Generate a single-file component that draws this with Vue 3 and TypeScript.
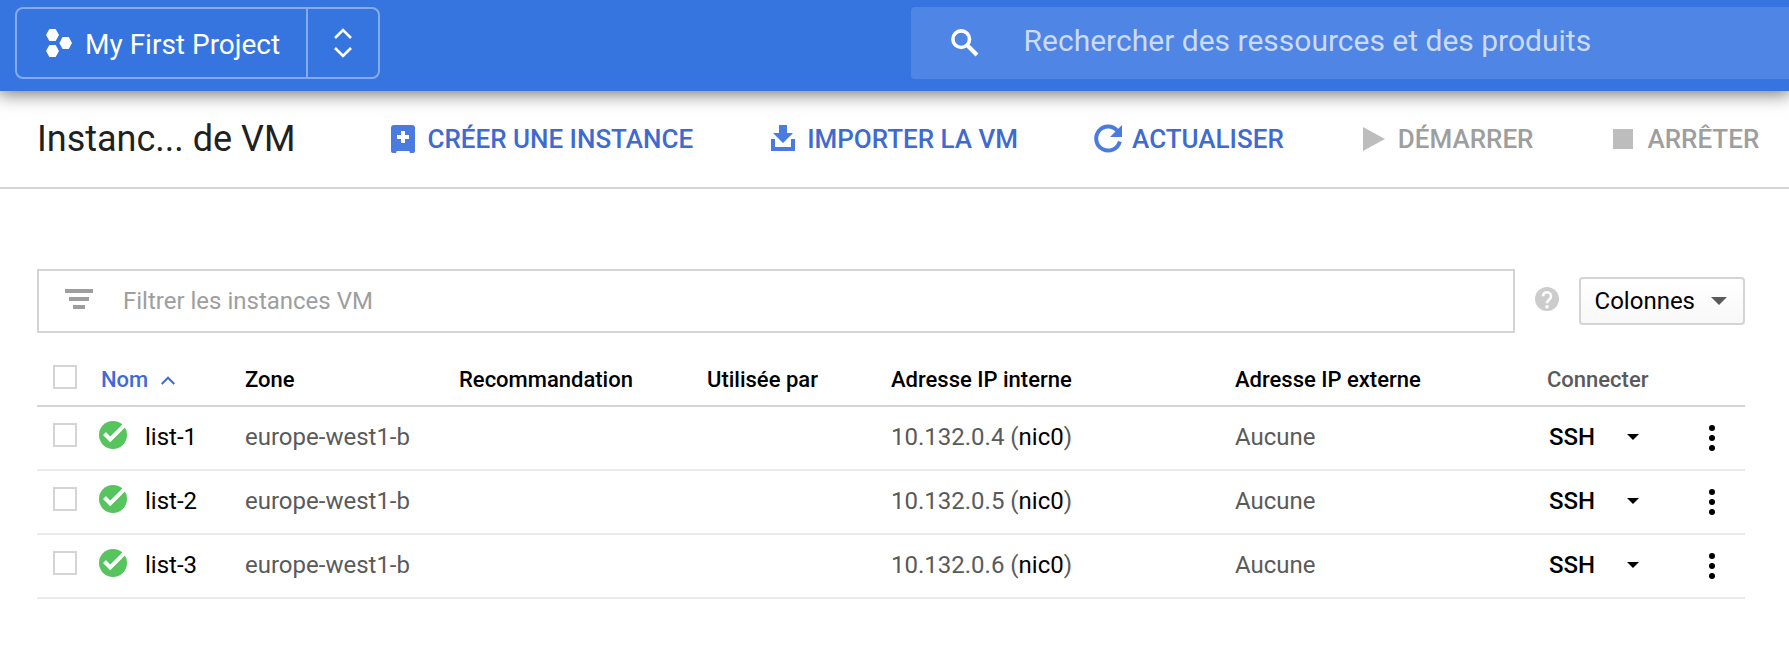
<script setup lang="ts">
import { computed, ref } from 'vue'

interface Instance {
  name: string
  zone: string
  internalIp: string
  nic: string
  externalIp: string
}

const instances: Instance[] = [
  { name: 'list-1', zone: 'europe-west1-b', internalIp: '10.132.0.4', nic: 'nic0', externalIp: 'Aucune' },
  { name: 'list-2', zone: 'europe-west1-b', internalIp: '10.132.0.5', nic: 'nic0', externalIp: 'Aucune' },
  { name: 'list-3', zone: 'europe-west1-b', internalIp: '10.132.0.6', nic: 'nic0', externalIp: 'Aucune' },
]

const search = ref('')
const filter = ref('')
const selected = ref<string[]>([])

const visible = computed(() => instances.filter((i) => i.name.includes(filter.value.trim())))

const allSelected = computed({
  get: () => selected.value.length === instances.length,
  set: (on: boolean) => {
    selected.value = on ? instances.map((i) => i.name) : []
  },
})
</script>

<template>
  <div class="console">
    <header class="topbar">
      <button class="picker" type="button">
        <span class="picker-name">
          <svg width="26" height="28" viewBox="0 0 26 28" fill="#fff" aria-hidden="true">
            <path d="M3.4 0h6.2L13 6l-3.4 6H3.4L0 6z" />
            <path d="M16.6 8h6.2l3.2 6-3.2 6h-6.2l-3.2-6z" />
            <path d="M3.4 16h6.2l3.4 6-3.4 6H3.4L0 22z" />
          </svg>
          <span>My First Project</span>
        </span>
        <span class="picker-arrows">
          <svg width="18" height="30" viewBox="0 0 18 30" fill="none" stroke="#fff" stroke-width="2.6" aria-hidden="true">
            <path d="M1 10l8-8 8 8M1 20l8 8 8-8" />
          </svg>
        </span>
      </button>
      <label class="search">
        <svg width="28" height="28" viewBox="0 0 28 28" fill="none" stroke="#fff" aria-hidden="true">
          <circle cx="10.2" cy="10.2" r="8.3" stroke-width="3.6" />
          <path d="M16 16l10 10" stroke-width="4" />
        </svg>
        <input v-model="search" type="text" placeholder="Rechercher des ressources et des produits" aria-label="Rechercher des ressources et des produits" />
      </label>
    </header>

    <div class="toolbar">
      <h1>Instanc... de VM</h1>
      <div class="actions">
        <button type="button" class="action">
          <svg width="36" height="36" viewBox="0 0 36 36" aria-hidden="true">
            <path fill="#4a7be0" fill-rule="evenodd" d="M9 4h18a3 3 0 0 1 3 3v23a2 2 0 0 1-2 2h-2a1.500 1.500 0 0 1-1.500-2h-13a1.500 1.500 0 0 1-1.500 2H8a2 2 0 0 1-2-2V7a3 3 0 0 1 3-3zm7 6v4h-4v4h4v4h4v-4h4v-4h-4v-4z" />
          </svg>
          Créer une instance
        </button>
        <button type="button" class="action">
          <svg width="36" height="36" viewBox="0 0 36 36" aria-hidden="true">
            <path fill="#4a7be0" d="M14 4h8v8h6l-10 10L8 12h6z" />
            <path fill="#4a7be0" d="M6 18h4v8h16v-8h4v12H6z" />
          </svg>
          Importer la VM
        </button>
        <button type="button" class="action">
          <svg width="36" height="36" viewBox="0 0 36 36" aria-hidden="true">
            <path fill="none" stroke="#4a7be0" stroke-width="4" d="M27.500 10A12 12 0 1 0 29.800 20.500" />
            <path fill="#4a7be0" d="M32 4v12H20z" />
          </svg>
          Actualiser
        </button>
        <button type="button" class="action" disabled>
          <svg width="36" height="36" viewBox="0 0 36 36" aria-hidden="true">
            <path fill="#bdbdbd" d="M7 6l22 12L7 30z" />
          </svg>
          Démarrer
        </button>
        <button type="button" class="action" disabled>
          <svg width="36" height="36" viewBox="0 0 36 36" aria-hidden="true">
            <path fill="#bdbdbd" d="M8 8h20v20H8z" />
          </svg>
          Arrêter
        </button>
      </div>
    </div>

    <main class="content">
      <div class="filter-row">
        <label class="filter">
          <svg width="28" height="20" viewBox="0 0 28 20" fill="#9e9e9e" aria-hidden="true">
            <path d="M0 0h28v4H0zM4 8h20v4H4zM8 16h12v4H8z" />
          </svg>
          <input v-model="filter" type="text" placeholder="Filtrer les instances VM" aria-label="Filtrer les instances VM" />
        </label>
        <button type="button" class="help" aria-label="Aide">
          <svg width="24" height="24" viewBox="0 0 24 24" aria-hidden="true">
            <circle cx="12" cy="12" r="12" fill="#ccc" />
            <path d="M8 9.300a4 4 0 1 1 6.600 3c-1.600 1.400-2.600 1.900-2.600 4" fill="none" stroke="#fff" stroke-width="2.600" />
            <circle cx="12" cy="19.700" r="1.800" fill="#fff" />
          </svg>
        </button>
        <button type="button" class="columns">
          Colonnes
          <svg width="16" height="8" viewBox="0 0 16 8" aria-hidden="true"><path fill="#5a5a5a" d="M0 0h16L8 8z" /></svg>
        </button>
      </div>

      <table>
        <colgroup>
          <col class="c-check" /><col class="c-name" /><col class="c-zone" /><col class="c-reco" /><col class="c-used" />
          <col class="c-int" /><col class="c-ext" /><col class="c-connect" /><col class="c-menu" />
        </colgroup>
        <thead>
          <tr>
            <th class="check"><input v-model="allSelected" type="checkbox" aria-label="Tout sélectionner" /></th>
            <th aria-sort="ascending">
              <button type="button" class="sort">
                Nom
                <svg width="14" height="9" viewBox="0 0 14 9" fill="none" stroke="#3f6ad8" stroke-width="2" aria-hidden="true"><path d="M.7 8L7 1.700 13.300 8" /></svg>
              </button>
            </th>
            <th>Zone</th>
            <th>Recommandation</th>
            <th>Utilisée par</th>
            <th>Adresse IP interne</th>
            <th>Adresse IP externe</th>
            <th class="muted">Connecter</th>
            <td></td>
          </tr>
        </thead>
        <tbody>
          <tr v-for="vm in visible" :key="vm.name">
            <td class="check"><input v-model="selected" type="checkbox" :value="vm.name" :aria-label="vm.name" /></td>
            <td>
              <div class="name">
                <svg width="28" height="28" viewBox="0 0 28 28" aria-hidden="true">
                  <circle cx="14" cy="14" r="14" fill="#57c45f" />
                  <path d="M5.500 12.500l5.700 6L25 4.700" fill="none" stroke="#fff" stroke-width="4" />
                </svg>
                <a href="#">{{ vm.name }}</a>
              </div>
            </td>
            <td>{{ vm.zone }}</td>
            <td></td>
            <td></td>
            <td>{{ vm.internalIp }} (<a href="#">{{ vm.nic }}</a>)</td>
            <td>{{ vm.externalIp }}</td>
            <td>
              <div class="ssh">
                <button type="button" class="ssh-open">SSH</button>
                <button type="button" class="ssh-more" aria-label="Options SSH">
                  <svg width="12" height="6" viewBox="0 0 12 6" aria-hidden="true"><path d="M0 0h12L6 6z" /></svg>
                </button>
              </div>
            </td>
            <td class="menu">
              <button type="button" aria-label="Plus d'actions">
                <svg width="6" height="26" viewBox="0 0 6 26" aria-hidden="true">
                  <circle cx="3" cy="3" r="3" /><circle cx="3" cy="13" r="3" /><circle cx="3" cy="23" r="3" />
                </svg>
              </button>
            </td>
          </tr>
        </tbody>
      </table>
    </main>
  </div>
</template>

<style>
body {
  margin: 0;
  background: #fff;
}
</style>

<style scoped>
.console {
  font-family: Roboto, "Liberation Sans", sans-serif;
  font-size: 24px;
  line-height: 32px;
  color: #5a5a5a;
  overflow-x: hidden;
}

button,
input {
  font: inherit;
  color: inherit;
  margin: 0;
  padding: 0;
  border: 0;
  background: none;
}

button {
  cursor: pointer;
}

svg {
  display: block;
  flex: none;
}

a {
  color: #000;
  text-decoration: none;
}

.topbar {
  display: grid;
  grid-template-columns: 509fr 491fr;
  height: 91px;
  box-sizing: border-box;
  padding: 7px 0 12px;
  background: #3675e0;
  box-shadow: 0 0 18px 2px rgba(0, 0, 0, 0.6);
}

.picker {
  display: flex;
  justify-self: start;
  margin-left: 15px;
  border: 2px solid #86abec;
  border-radius: 8px;
  color: #fff;
  font-size: 28px;
}

.picker-name {
  display: flex;
  align-items: center;
  gap: 13px;
  padding: 4px 26px 0 29px;
  height: 64px;
}

.picker-name svg {
  margin-bottom: 4px;
}

.picker-arrows {
  display: flex;
  align-items: center;
  padding: 0 26px;
  border-left: 2px solid #86abec;
}

.search {
  display: flex;
  align-items: center;
  gap: 45px;
  padding-left: 40px;
  background: #4f85e4;
  border-radius: 4px 0 0 4px;
}

.search input {
  flex: 1;
  min-width: 0;
  padding-bottom: 4px;
  outline: none;
  color: #fff;
  font-size: 30px;
}

.search input::placeholder {
  color: #cbdaf7;
  opacity: 1;
}

.toolbar {
  display: flex;
  align-items: center;
  gap: 90px;
  padding: 24px 28px 24px 37px;
  border-bottom: 2px solid #d4d4d4;
  white-space: nowrap;
}

h1 {
  margin: 0;
  font-size: 36px;
  line-height: 48px;
  font-weight: 400;
  color: #212121;
}

.actions {
  display: flex;
  gap: 72px;
}

.action {
  display: flex;
  align-items: center;
  gap: 6px;
  color: #3f6ad0;
  font-size: 26px;
  font-weight: 500;
  text-transform: uppercase;
}

.action:disabled {
  color: #9e9e9e;
  cursor: default;
}

.content {
  padding: 80px 44px 52px 37px;
}

.filter-row {
  display: flex;
  align-items: center;
}

.filter {
  flex: 1;
  display: flex;
  align-items: center;
  gap: 30px;
  height: 60px;
  padding: 0 26px;
  border: 2px solid #d4d4d4;
}

.filter svg {
  margin-bottom: 4px;
}

.filter input {
  flex: 1;
  min-width: 0;
  outline: none;
}

.filter input::placeholder {
  color: #9e9e9e;
  opacity: 1;
}

.help {
  margin: 0 20px 4px;
}

.columns {
  display: flex;
  align-items: center;
  gap: 16px;
  height: 48px;
  padding: 0 16px 0 14px;
  border: 2px solid #d4d4d4;
  border-radius: 4px;
  background: linear-gradient(#fff, #f8f8f8);
  color: #000;
}

table {
  width: 100%;
  margin-top: 20px;
  table-layout: fixed;
  border-collapse: separate;
  border-spacing: 0;
}

.c-check { width: 62px; }
.c-name { width: 146px; }
.c-zone { width: 214px; }
.c-reco { width: 248px; }
.c-used { width: 184px; }
.c-int { width: 344px; }
.c-ext { width: 312px; }
.c-connect { width: 132px; }
.c-menu { width: 66px; }

th,
td {
  text-align: left;
  vertical-align: middle;
  white-space: nowrap;
}

th {
  font-size: 22px;
  font-weight: 500;
  color: #000;
}

thead th,
thead td {
  height: 50px;
  padding: 2px 0 0;
  border-bottom: 2px solid #d4d4d4;
}

tbody td {
  height: 60px;
  padding: 0 0 2px;
  border-bottom: 2px solid #ebebeb;
}

th.muted {
  color: #5a5a5a;
}

thead .check {
  height: 48px;
  padding: 0 0 4px 16px;
}

tbody .check {
  height: 56px;
  padding: 0 0 6px 16px;
}

.check input {
  display: block;
  appearance: none;
  width: 24px;
  height: 24px;
  border: 2px solid #d4d4d4;
}

.check input:checked {
  border-color: #4a7be0;
  background: #4a7be0;
}

.sort {
  display: flex;
  align-items: center;
  gap: 13px;
  padding-left: 2px;
  color: #3f6ad8;
}

.name {
  display: flex;
  align-items: center;
  gap: 18px;
}

.name svg {
  margin-bottom: 4px;
}

.ssh {
  display: flex;
  align-items: center;
  gap: 32px;
  padding-left: 2px;
}

.ssh-open {
  color: #000;
  font-weight: 500;
}

.menu button {
  display: block;
  margin: 0 auto;
}

tbody .menu {
  height: 62px;
  padding: 0;
}
</style>
